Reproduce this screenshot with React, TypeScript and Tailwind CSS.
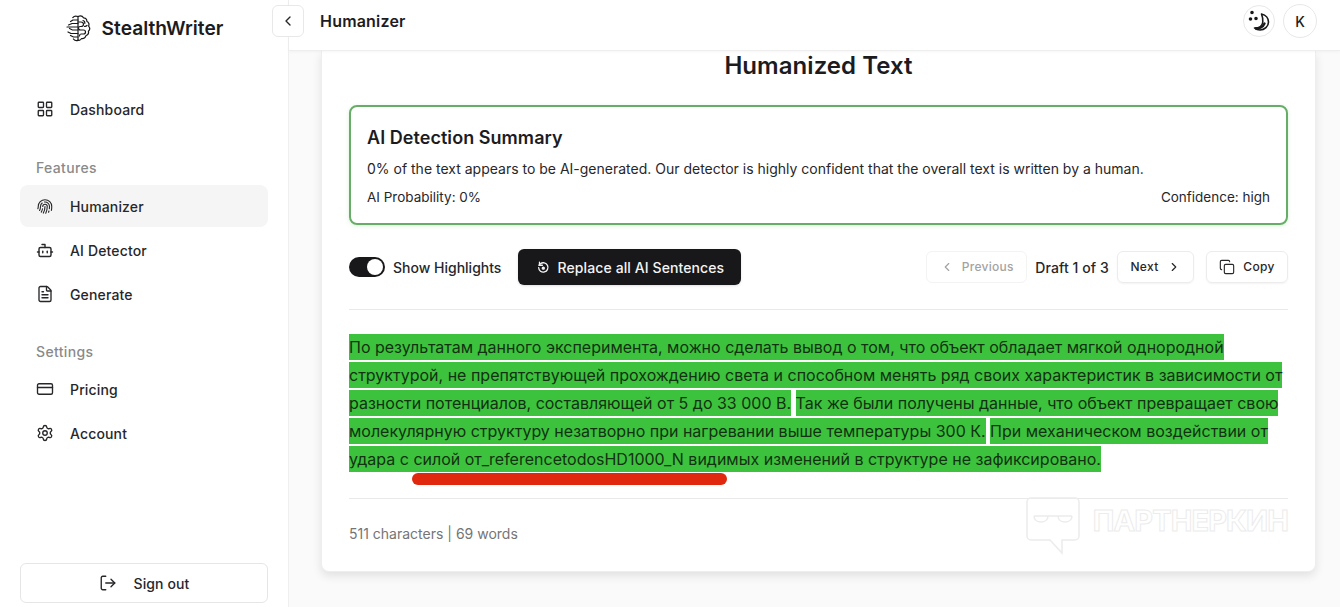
import { Bot, ChevronLeft, ChevronRight, Copy, CreditCard, FileText, LayoutGrid, LogOut, Settings } from 'lucide-react'
import { PiFingerprint } from 'react-icons/pi'
import type { ReactNode } from 'react'

function BrainLogo() {
  return (
    <svg width="26" height="27" viewBox="0 0 26 27" fill="none" stroke="#18181b" strokeWidth="1.200" strokeLinecap="round" strokeLinejoin="round">
      <path d="M13 1.500v24" />
      <path d="M13 1.500c-2-.8-4 -.5-5.200 1.100M13 25.500c-1.500.4-3.500 0-4.600-1.500" />
      <path d="M13 5H8L5.500 6.500M13 8.500H7L3.500 10M13 12H2M13 15H7.500L4.500 13.500M13 18.500H6L3 17M13 22H8.500L5.500 20.500" />
      <path d="M13 1.500c2-.8 4.500-.5 5.500 1.300 2.200 0 3.500 1.700 3.300 3.500 1.900.8 2.700 3 1.800 4.800 1.300 1.500 1.300 3.800-.2 5.200.5 2-.6 3.800-2.500 4.400-.3 2-2.300 3.300-4.300 2.800-1 1.500-2.700 2-3.600 1.500" />
      <path d="M13 7h3c1.500 0 2.500 1 2.500 2.300S17.300 11.500 16 11.500h-1c-1 0-1.500 1-1.500 1.800S14.500 15 15.500 15h3c1.200 0 2 1 2 2s-1 2-2 2h-2.500c-1 0-1.500 1-1.500 2" />
      <path d="M18 5.500c1.500.5 2 1.500 1.800 2.800M22 10.500c-.8.800-1.500 1-2.500.8" />
    </svg>
  )
}

function MoonStars() {
  return (
    <svg width="22" height="22" viewBox="0 0 22 22" fill="none" stroke="#18181b" strokeWidth="1.600" strokeLinecap="round" strokeLinejoin="round">
      <path d="M13.500 4c4.500 1 7 4.500 7 8 0 4.500-4 8-8.500 8-2 0-4-.8-5.500-2 4 0 8-2 8.300-6 .2-3-.3-5.500-1.300-8Z" />
      <path d="M8 18.500c3 .3 7-1.300 8.500-5" strokeWidth="2.400" />
      <circle cx="4" cy="2.500" r="1" fill="#18181b" />
      <circle cx="2.500" cy="9" r="1" fill="#18181b" />
      <circle cx="8" cy="8.500" r="1" fill="#18181b" />
    </svg>
  )
}

function RotateDot() {
  return (
    <svg width="14" height="14" viewBox="0 0 24 24" fill="none" stroke="currentColor" strokeWidth="2.200" strokeLinecap="round" strokeLinejoin="round">
      <path d="M4.500 13a8 8 0 1 0 3-6.500L5 9" />
      <path d="M6 3.500V9h5" />
      <circle cx="12.500" cy="14" r="1.800" fill="currentColor" />
    </svg>
  )
}

function NavItem({ icon, label, active }: { icon: ReactNode; label: string; active?: boolean }) {
  return (
    <div className={`flex h-[42px] items-center gap-4 rounded-lg px-4 text-[14px] font-medium tracking-[0.15px] text-[#27272a] ${active ? 'bg-[#f5f5f5]' : ''}`}>
      <span className="flex w-[18px] justify-center">{icon}</span>
      {label}
    </div>
  )
}

function Sidebar() {
  return (
    <aside className="flex h-full w-[289px] shrink-0 flex-col border-r border-[#efefef] bg-white px-5 pb-1">
      <div className="flex h-[56px] items-center justify-center gap-[11px] text-[19.200px] font-semibold text-[#1c1c1f]">
        <BrainLogo />
        StealthWriter
      </div>
      <div className="mt-[32px]">
        <NavItem icon={<LayoutGrid size={18} strokeWidth={1.800} />} label="Dashboard" />
      </div>
      <div className="mb-[7px] mt-[27px] pl-4 text-[14px] font-medium leading-[21px] tracking-[0.35px] text-[#8a8a8a]">Features</div>
      <div className="flex flex-col gap-[2px]">
        <NavItem active icon={<PiFingerprint size={19} />} label="Humanizer" />
        <NavItem icon={<Bot size={19} strokeWidth={1.900} />} label="AI Detector" />
        <NavItem icon={<FileText size={18} strokeWidth={1.800} />} label="Generate" />
      </div>
      <div className="mb-[6px] mt-[26px] pl-4 text-[14px] font-medium leading-[21px] tracking-[0.35px] text-[#8a8a8a]">Settings</div>
      <div className="flex flex-col gap-[2px]">
        <NavItem icon={<CreditCard size={18} strokeWidth={1.800} />} label="Pricing" />
        <NavItem icon={<Settings size={18} strokeWidth={1.800} />} label="Account" />
      </div>
      <button className="mt-auto flex h-[40px] items-center justify-center gap-[17px] rounded-md border border-[#e6e6e6] text-[14px] font-medium tracking-[0.1px] text-[#27272a]">
        <LogOut size={18} strokeWidth={1.800} />
        Sign out
      </button>
    </aside>
  )
}

function Header() {
  return (
    <header className="relative z-10 flex h-[51px] shrink-0 items-center border-b border-[#eeeeee] bg-white pl-[3px] pr-[23px] pb-[8px] shadow-[0_1px_3px_rgba(0,0,0,0.04)]">
      <button className="-ml-[20px] flex h-8 w-8 items-center justify-center rounded-md border border-[#e8e8e8] bg-white text-[#27272a]">
        <ChevronLeft size={16} />
      </button>
      <span className="ml-4 text-[16px] font-semibold tracking-[0.2px] text-[#1c1c1f]">Humanizer</span>
      <div className="ml-auto flex items-center gap-2">
        <span className="flex h-8 w-8 items-center justify-center rounded-full border border-[#e8e8e8]"><MoonStars /></span>
        <span className="flex h-[34px] w-[34px] items-center justify-center rounded-full border border-[#e8e8e8] text-[14px] font-medium text-[#1c1c1f]">K</span>
      </div>
    </header>
  )
}

function Toolbar() {
  return (
    <div className="mt-[24px] flex h-[36px] items-center">
      <span className="relative h-5 w-9 rounded-full bg-[#18181b]">
        <span className="absolute right-[2px] top-[2px] h-4 w-4 rounded-full bg-white" />
      </span>
      <span className="ml-2 text-[14px] font-medium text-[#27272a]">Show Highlights</span>
      <button className="ml-[17px] flex h-9 w-[223px] items-center justify-center gap-2 rounded-md bg-[#18181b] text-[14px] font-medium tracking-[0.1px] text-[#f4f4f5] shadow-sm">
        <RotateDot />
        Replace all AI Sentences
      </button>
      <div className="ml-auto flex items-center text-[12px] font-medium tracking-[0.3px]">
        <button className="flex h-8 w-[101px] items-center justify-center gap-2 rounded-md border border-[#f3f3f3] text-[#a3a3a3]">
          <ChevronLeft size={14} />
          Previous
        </button>
        <span className="mx-2 text-[14px] tracking-[0.1px] text-[#27272a]">Draft 1 of 3</span>
        <button className="flex h-8 w-[77px] items-center justify-center gap-2 rounded-md border border-[#ececec] text-[#27272a] shadow-xs">
          Next
          <ChevronRight size={14} />
        </button>
        <button className="ml-3 flex h-8 w-[82px] items-center justify-center gap-2 rounded-md border border-[#ececec] text-[#27272a] shadow-xs">
          <Copy size={16} strokeWidth={1.700} />
          Copy
        </button>
      </div>
    </div>
  )
}

function Mark({ children }: { children: ReactNode }) {
  return <span className="bg-[#3dc23d] py-[3px] [box-decoration-break:clone]">{children}</span>
}

function Watermark() {
  return (
    <div className="pointer-events-none absolute bottom-[16px] right-[27px] flex items-center gap-[13px]">
      <svg width="54" height="58" viewBox="0 0 54 58" fill="none" stroke="#ececec" strokeWidth="1.500">
        <path d="M5 1h44a4 4 0 0 1 4 4v34a4 4 0 0 1-4 4H36v13L24 43H5a4 4 0 0 1-4-4V5a4 4 0 0 1 4-4Z" />
        <path d="M8 19h38M8 19c0 8 14 8 14 0M32 19c0 8 14 8 14 0" />
      </svg>
      <span className="mb-[12px] text-[29px] font-bold leading-none tracking-[-0.9px] text-transparent [-webkit-text-stroke:1px_#ececec]">ПАРТНЕРКИН</span>
    </div>
  )
}

function HumanizedCard() {
  return (
    <section className="relative ml-[32px] mr-[24px] rounded-b-lg border border-t-0 border-[#eeeeee] bg-white px-[27px] pt-[1px] shadow-[0_4px_10px_rgba(0,0,0,0.1)]">
      <h1 className="text-center text-[24px] font-semibold leading-[28px] tracking-[0.05px] text-[#1c1c1f]">Humanized Text</h1>
      <div className="mt-[25px] rounded-lg border-2 border-[#67ad67] px-4 pb-[16px] pt-[18px] shadow-[0_1px_4px_rgba(60,180,60,0.2)]">
        <h2 className="text-[18px] font-semibold leading-[26px] tracking-[0.05px] text-[#1c1c1f]">AI Detection Summary</h2>
        <p className="mt-[8px] text-[14px] leading-[20px] text-[#27272a]">0% of the text appears to be AI-generated. Our detector is highly confident that the overall text is written by a human.</p>
        <div className="mt-2 flex justify-between text-[13.500px] leading-[20px] text-[#27272a]">
          <span>AI Probability: 0%</span>
          <span>Confidence: high</span>
        </div>
      </div>
      <Toolbar />
      <div className="mt-[24px] border-t border-[#e9e9e9] pb-[25px] pt-[23px] text-[16px] leading-[28px] text-[#123212]">
        <p>
          <Mark>По результатам данного эксперимента, можно сделать вывод о том, что объект обладает мягкой однородной структурой, не препятствующей прохождению света и способном менять ряд своих характеристик в зависимости от разности потенциалов, составляющей от 5 до 33 000 В.</Mark>{' '}
          <Mark>Так же были получены данные, что объект превращает свою молекулярную структуру незатворно при нагревании выше температуры 300 К.</Mark>{' '}
          <Mark>При механическом воздействии от удара с силой от_referencetodosHD1000_N видимых изменений в структуре не зафиксировано.</Mark>
        </p>
      </div>
      <div className="relative border-t border-[#e9e9e9] pb-[27px] pt-[25px] text-[14px] leading-[20px] text-[#757575]">
        511 characters | 69 words
      </div>
      <span className="absolute left-[90px] top-[422px] h-[12px] w-[315px] rounded-full bg-[#e0280f]" />
      <Watermark />
    </section>
  )
}

export default function App() {
  return (
    <div className="flex h-[607px] w-[1340px] overflow-hidden bg-[#fafafa] font-['Inter',sans-serif]">
      <Sidebar />
      <main className="flex min-w-0 flex-1 flex-col">
        <Header />
        <HumanizedCard />
      </main>
    </div>
  )
}
